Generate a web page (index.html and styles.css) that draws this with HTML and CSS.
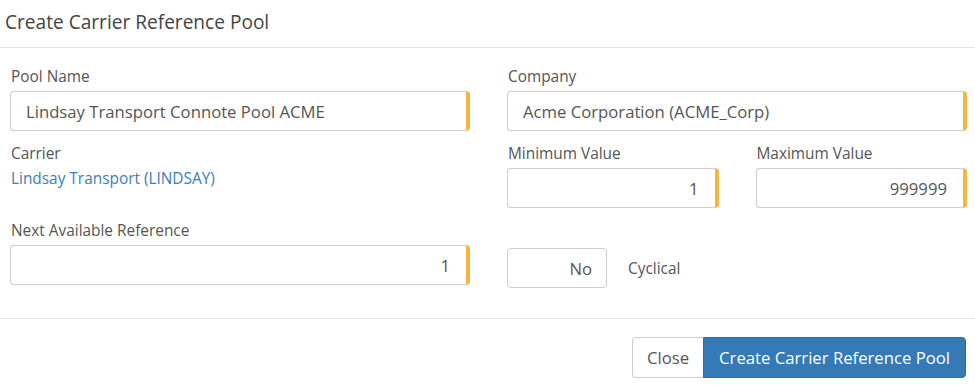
FILE: index.html
```html
<!DOCTYPE html>
<html lang="en">
<head>
  <meta charset="UTF-8">
  <title>Create Carrier Reference Pool</title>
  <link rel="stylesheet" href="styles.css">
</head>
<body>
  <div class="modal">
    <div class="modal-header">
      <h4 class="modal-title">Create Carrier Reference Pool</h4>
    </div>
    <div class="modal-body">
      <div class="form-row">
        <div class="form-group">
          <label>Pool Name</label>
          <input class="form-control required" type="text" value="Lindsay Transport Connote Pool ACME" readonly>
        </div>
        <div class="form-group">
          <label>Company</label>
          <input class="form-control required" type="text" value="Acme Corporation (ACME_Corp)" readonly>
        </div>
      </div>
      <div class="form-row">
        <div class="form-group">
          <label>Carrier</label>
          <a class="carrier-link" href="#">Lindsay Transport (LINDSAY)</a>
        </div>
        <div class="range">
          <div class="form-group">
            <label>Minimum Value</label>
            <input class="form-control required num" type="text" value="1" readonly>
          </div>
          <div class="form-group">
            <label>Maximum Value</label>
            <input class="form-control required num" type="text" value="999999" readonly>
          </div>
        </div>
      </div>
      <div class="form-row">
        <div class="form-group">
          <label>Next Available Reference</label>
          <input class="form-control required num" type="text" value="1" readonly>
        </div>
        <div class="toggle-group">
          <button class="toggle" type="button">No</button>
          <span class="toggle-label">Cyclical</span>
        </div>
      </div>
    </div>
    <div class="modal-footer">
      <div class="btn-group">
        <button class="btn btn-default" type="button">Close</button>
        <button class="btn btn-primary" type="button">Create Carrier Reference Pool</button>
      </div>
    </div>
  </div>
</body>
</html>
```

FILE: styles.css
```css
body {
  margin: 0;
  font-family: 'Open Sans', 'Noto Sans', sans-serif;
  color: #555;
  background: #fff;
}
.modal { width: 975px; height: 385px; overflow: hidden; }
.modal-header {
  height: 47px;
  border-bottom: 1px solid #e5e5e5;
  padding: 0 5px;
  box-sizing: content-box;
}
.modal-title {
  margin: 0;
  padding-top: 9px;
  font-size: 19.1px;
  line-height: 26px;
  font-weight: normal;
  color: #444;
}
.modal-body { padding: 19px 8px 30px 10px; }
.form-row {
  display: grid;
  grid-template-columns: 1fr 1fr;
  column-gap: 37px;
  margin-bottom: 13px;
}
.form-row:last-child { margin-bottom: 0; }
.form-group { display: flex; flex-direction: column; }
label {
  font-size: 15.4px;
  line-height: 20px;
  margin: 0 0 4px 1px;
  color: #555;
}
.form-control {
  height: 40px;
  box-sizing: border-box;
  border: 1px solid #ccc;
  border-radius: 4px;
  padding: 0 16px 0 15px;
  font-family: inherit;
  font-size: 16.7px;
  color: #555;
  background: #fff;
  outline: none;
  width: 100%;
}
.required { border-right: 4px solid #f4b63c; }
.num { text-align: right; }
.carrier-link {
  font-size: 15.4px;
  line-height: 20px;
  margin: 1px 0 0 1px;
  color: #3a80bd;
  text-decoration: none;
}
.range {
  display: grid;
  grid-template-columns: 1fr 1fr;
  column-gap: 37px;
}
.toggle-group {
  display: flex;
  align-items: center;
  margin-top: 27px;
}
.toggle {
  width: 100px;
  height: 40px;
  border: 1px solid #ccc;
  border-radius: 4px;
  background: #fff;
  font-family: inherit;
  font-size: 16.7px;
  color: #555;
  text-align: right;
  padding: 0 14px 0 0;
}
.toggle-label { font-size: 15.4px; margin-left: 21px; color: #555; }
.modal-footer {
  border-top: 1px solid #e5e5e5;
  padding: 18px 9px 0 0;
  display: flex;
  justify-content: flex-end;
}
.btn-group { display: flex; }
.btn {
  height: 41px;
  padding: 0 15px;
  font-family: inherit;
  font-size: 16.7px;
  border: 1px solid #ccc;
  cursor: pointer;
}
.btn-default {
  background: #fff;
  color: #555;
  border-radius: 4px 0 0 4px;
  border-right: none;
  padding: 0 14px;
}
.btn-primary {
  background: #337ab7;
  border-color: #2e6da4;
  color: #fff;
  border-radius: 0 4px 4px 0;
}
```
